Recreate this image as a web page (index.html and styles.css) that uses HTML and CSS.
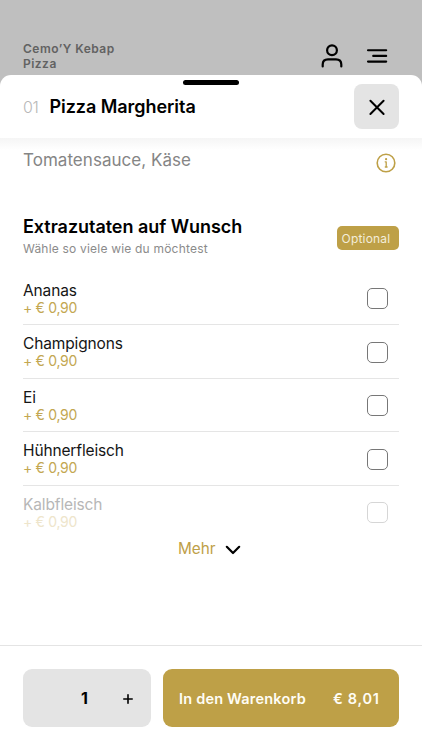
FILE: index.html
```html
<!DOCTYPE html>
<html lang="de">
<head>
<meta charset="utf-8">
<meta name="viewport" content="width=device-width">
<title>Pizza Margherita</title>
<link rel="stylesheet" href="styles.css">
</head>
<body>
<div class="topbar">
  <div class="shop"><span>Cemo’Y Kebap</span><br><span>Pizza</span></div>
  <svg class="user" width="22" height="24" viewBox="0 0 22 24"><circle cx="11" cy="6.3" r="4.9"/><path d="M1.7 22.5V20.5Q1.7 15.4 7 15.4H15Q20.3 15.4 20.3 20.5V22.5"/></svg>
  <svg class="menu" width="22" height="16" viewBox="0 0 22 16"><path d="M2 2.2H20.2M7.2 7.9H20.2M2 13.6H20.2"/></svg>
</div>
<main class="sheet">
  <div class="handle"></div>
  <header class="head">
    <span class="num">01</span>
    <h1>Pizza Margherita</h1>
    <button class="close" aria-label="Schließen"><svg width="18" height="18" viewBox="0 0 18 18"><path d="M2.4 2.8L15.6 16M15.6 2.8L2.4 16"/></svg></button>
  </header>
  <section class="body">
    <div class="desc">
      <p>Tomatensauce, Käse</p>
      <svg width="20" height="20" viewBox="0 0 20 20"><circle cx="10" cy="10" r="8.8"/><path d="M9.2 8.8H10.2V14M9.3 14H11.1"/><circle class="dot" cx="10.1" cy="6.2" r="1.1"/></svg>
    </div>
    <div class="group">
      <div>
        <h2>Extrazutaten auf Wunsch</h2>
        <p class="hint">Wähle so viele wie du möchtest</p>
      </div>
      <span class="tag">Optional</span>
    </div>
    <div class="list">
      <div class="row"><div><div class="name">Ananas</div><div class="price">+ € 0,90</div></div><i class="box"></i></div>
      <div class="row"><div><div class="name">Champignons</div><div class="price">+ € 0,90</div></div><i class="box"></i></div>
      <div class="row"><div><div class="name">Ei</div><div class="price">+ € 0,90</div></div><i class="box"></i></div>
      <div class="row"><div><div class="name">Hühnerfleisch</div><div class="price">+ € 0,90</div></div><i class="box"></i></div>
      <div class="row faded"><div><div class="name">Kalbfleisch</div><div class="price">+ € 0,90</div></div><i class="box"></i></div>
    </div>
    <div class="more"><span>Mehr</span><svg width="16" height="10" viewBox="0 0 16 10"><path d="M1.8 1.8L8 8L14.2 1.8"/></svg></div>
  </section>
  <footer class="foot">
    <div class="qty"><b>1</b><svg width="10" height="10" viewBox="0 0 10 10"><path d="M.8 5H9.2M5 .8V9.2"/></svg></div>
    <button class="cart"><span class="label">In den Warenkorb</span><span class="total">€ 8,01</span></button>
  </footer>
</main>
</body>
</html>
```
FILE: styles.css
```css
* { box-sizing: border-box; }
body { margin: 0; height: 750px; overflow: hidden; display: flex; flex-direction: column; background: #bfbfbf; font-family: Inter, "Liberation Sans", sans-serif; color: #000; }
h1, h2, p { margin: 0; white-space: nowrap; }
svg { display: block; fill: none; stroke: #000; stroke-linecap: round; stroke-linejoin: round; flex: none; }
button { border: 0; padding: 0; font: inherit; }
.topbar { height: 75px; flex: none; display: flex; align-items: flex-start; padding: 41px 34px 0 23px; }
.shop { flex: 1; font-size: 12px; line-height: 15px; font-weight: 600; letter-spacing: .48px; color: #626262; }
.user { margin: 3px 23px 0 0; stroke-width: 2.2; }
.menu { margin-top: 7px; stroke-width: 2.1; }
.sheet { flex: 1; min-height: 0; display: flex; flex-direction: column; background: #fff; border-radius: 11px 11px 0 0; position: relative; }
.handle { position: absolute; top: 5px; left: 183px; width: 56px; height: 5px; border-radius: 3px; background: #000; }
.head { height: 63px; flex: none; display: flex; align-items: center; padding: 0 23px; }
.num { width: 26.5px; font-size: 16px; font-weight: 300; letter-spacing: -.4px; color: #b8b8b8; }
h1 { flex: 1; font-size: 18px; font-weight: 600; letter-spacing: -.05px; }
.close { width: 45px; height: 45px; border-radius: 8px; background: #e4e4e4; display: grid; place-items: center; stroke-width: 2; }
.body { flex: 1; min-height: 0; padding: 0 23px; background: linear-gradient(#f5f5f5, #fff 12px); }
.desc { display: flex; justify-content: space-between; padding: 11px 3px 0 0; height: 74px; }
.desc p { font-size: 17px; line-height: 22px; letter-spacing: .04px; color: #858585; }
.desc svg { margin-top: 4px; stroke: #bea047; stroke-width: 1.6; }
.desc path { stroke-width: 1.3; }
.desc .dot { fill: #bea047; stroke: none; }
.group { display: flex; justify-content: space-between; height: 60px; }
h2 { margin-top: 3px; font-size: 18px; line-height: 24px; font-weight: 600; letter-spacing: -.04px; }
.hint { margin-top: 2px; font-size: 12px; line-height: 16px; letter-spacing: .2px; color: #8b8b8b; }
.tag { margin-top: 14px; width: 62px; height: 24px; border-radius: 5px; background: #bea047; color: #f3edda; font-size: 12px; line-height: 25px; padding-left: 4.5px; letter-spacing: .2px; }
.row { height: 53.4px; display: flex; justify-content: space-between; padding: 8px 11px 0 0; border-bottom: 1px solid #e5e5e5; }
.name { font-size: 15.5px; line-height: 20px; padding-top: 1px; margin-bottom: -1px; letter-spacing: -.14px; color: #151515; }
.price { font-size: 14px; line-height: 15px; letter-spacing: -.3px; color: #c3a751; }
.box { width: 21px; height: 21px; margin-top: 8.4px; border: 1px solid #777; border-radius: 5px; }
.faded { border: 0; height: 54px; overflow: hidden; }
.faded .name { color: #b7b7b7; }
.faded .price { color: #eee5cb; }
.faded .box { border-color: #d6d6d6; }
.more { display: flex; align-items: center; gap: 9.5px; margin-top: -1px; padding-left: 155px; height: 20px; color: #bea047; font-size: 15.3px; }
.more svg { stroke-width: 2.2; margin-top: 3px; }
.foot { height: 105px; flex: none; display: flex; gap: 12px; padding: 23px 23px 23px; border-top: 1px solid #e4e4e4; }
.qty { width: 128px; height: 58px; border-radius: 9px; background: #e4e4e4; display: flex; align-items: center; padding-left: 58px; }
.qty b { width: 42px; font-size: 16px; font-weight: 700; }
.qty svg { margin-top: 1px; stroke-width: 1.6; }
.cart { flex: 1; height: 58px; border-radius: 9px; background: #bea047; color: #fffdf5; display: flex; align-items: center; justify-content: space-between; padding: 0 19.5px 0 16px; font-size: 14.5px; font-weight: 600; }
.label { letter-spacing: .2px; }
.total { letter-spacing: .7px; }
```
